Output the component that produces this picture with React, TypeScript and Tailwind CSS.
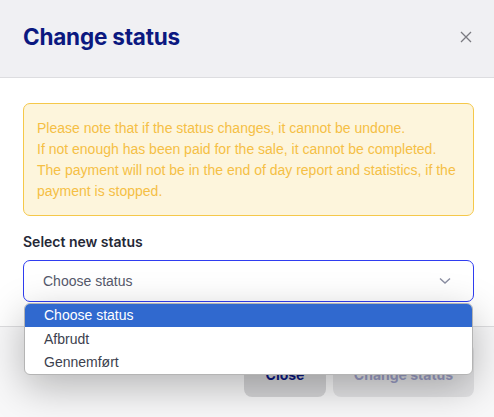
import React from "react";

export default function App() {
  return (
    <div className="relative w-[494px] h-[417px] overflow-hidden bg-white" style={{ fontFamily: '"Liberation Sans", Arial, sans-serif' }}>
      <div className="h-[78px] bg-[#f0f0f3] border-b border-[#dddde0] pl-[23px] pr-[22px] flex items-center justify-between">
        <h1 className="text-[22.5px] font-bold text-[#0b1880] tracking-[-0.2px] mt-[-3px]" style={{ fontFamily: 'Inter, "Noto Sans", sans-serif' }}>
          Change status
        </h1>
        <svg width="12" height="12" viewBox="0 0 12 12" className="mt-[-3px]">
          <path d="M1 1 L11 11 M11 1 L1 11" stroke="#7a7a80" strokeWidth="1.3" fill="none" />
        </svg>
      </div>
      <div className="pl-[23px] pr-[20px] pt-[25px] pb-[24px] border-b border-[#dedee0]">
        <div className="rounded-[7px] border border-[#f5c84a] bg-[#fdf5dc] px-[13px] pt-[14px] pb-[13px] text-[14px] leading-[21px] text-[#f5bf45]">
          <p>Please note that if the status changes, it cannot be undone.</p>
          <p>If not enough has been paid for the sale, it cannot be completed.</p>
          <p>The payment will not be in the end of day report and statistics, if the payment is stopped.</p>
        </div>
        <div className="mt-[16px] text-[14px] leading-[20px] font-semibold text-[#252836]" style={{ fontFamily: 'Inter, "Noto Sans", sans-serif' }}>
          Select new status
        </div>
        <div className="mt-[8px] h-[42px] rounded-[7px] border border-[#2f3df0] flex items-center justify-between pl-[19px] pr-[22px]">
          <span className="text-[14px] text-[#55596b]">Choose status</span>
          <svg width="12" height="8" viewBox="0 0 12 8">
            <path d="M1 1.5 L6 6 L11 1.5" stroke="#8a8ea2" strokeWidth="1.4" fill="none" />
          </svg>
        </div>
      </div>
      <div className="h-[90px] bg-[#f8f8f9] flex justify-end gap-[7px] pt-[16px] pr-[20px]">
        <div className="w-[82px] h-[54px] rounded-[8px] bg-[#d6d6d8] flex items-center justify-center pt-[8px] text-[14px] font-bold text-[#0b1880]" style={{ fontFamily: 'Inter, "Noto Sans", sans-serif' }}>
          Close
        </div>
        <div className="w-[141px] h-[54px] rounded-[8px] bg-[#e4e4e6] flex items-center justify-center pt-[8px] text-[14px] font-bold text-[#9a9dc4]" style={{ fontFamily: 'Inter, "Noto Sans", sans-serif' }}>
          Change status
        </div>
      </div>
      <div className="absolute left-[24px] top-[303px] w-[449px] bg-white rounded-[6px] border border-[#b4b4b4] overflow-hidden shadow-[0_12px_40px_rgba(0,0,0,0.28)] text-[14px] leading-[23px]">
        <div className="bg-[#3069cf] text-white pl-[19px] h-[23px]">Choose status</div>
        <div className="text-[#3c3f4e] pl-[19px] h-[24px] leading-[24px]">Afbrudt</div>
        <div className="text-[#3c3f4e] pl-[19px] h-[23px]">Gennemført</div>
      </div>
    </div>
  );
}
